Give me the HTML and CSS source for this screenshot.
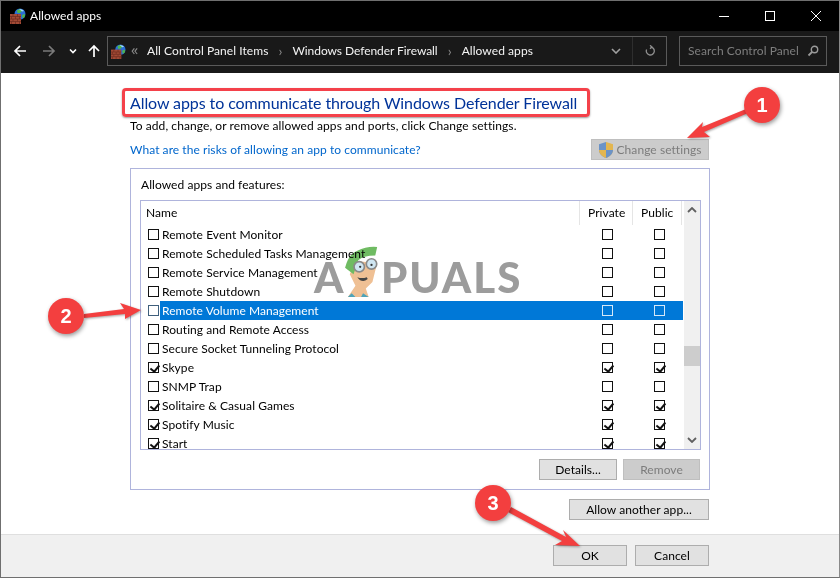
FILE: index.html
```html
<!DOCTYPE html>
<html lang="en">
<head>
<meta charset="utf-8">
<title>Allowed apps</title>
<link rel="stylesheet" href="styles.css">
</head>
<body>
<svg class="defs" width="0" height="0" aria-hidden="true">
  <defs>
    <symbol id="fw" viewBox="0 0 16 16">
      <circle cx="10" cy="6" r="5.5" fill="#2a6fd6"/>
      <path d="M7 2.2 L10 1 L12 3 L10 5 L7.5 5Z M12 7 L15 6 L14.5 9.5 L12.5 10Z" fill="#4fb848"/>
      <path d="M9 1 Q12 .8 14 3 L12 3.5Z" fill="#a8dcf5"/>
      <rect x="0" y="6" width="11" height="10" fill="#a24a35"/>
      <path d="M0 8.5H11M0 11H11M0 13.5H11M3 6V8.5M7.5 6V8.5M1.5 8.5V11M5.5 8.5V11M9.5 8.5V11M3 11V13.5M7.5 11V13.5M1.5 13.5V16M5.5 13.5V16M9.5 13.5V16" stroke="#6d2c20" stroke-width=".7" fill="none"/>
    </symbol>
  </defs>
</svg>
<div class="window">
  <header class="titlebar">
    <svg class="title-icon"><use href="#fw"/></svg>
    <span class="title-text">Allowed apps</span>
    <div class="win-controls">
      <svg class="ctl" viewBox="0 0 46 20"><path d="M18 10.5H28" stroke="#fff" fill="none"/></svg>
      <svg class="ctl" viewBox="0 0 46 20"><rect x="18.5" y="5.5" width="9" height="9" stroke="#fff" fill="none"/></svg>
      <svg class="ctl" viewBox="0 0 46 20"><path d="M18 5L28 15M28 5L18 15" stroke="#fff" fill="none"/></svg>
    </div>
  </header>
  <nav class="navbar">
    <svg class="nav-icon back" viewBox="0 0 14 14"><path d="M13 7H2M7 2L2 7L7 12" stroke="#fff" stroke-width="1.7" fill="none"/></svg>
    <svg class="nav-icon forward" viewBox="0 0 14 14"><path d="M1 7H12M7 2L12 7L7 12" stroke="#7a7a7a" stroke-width="1.7" fill="none"/></svg>
    <svg class="nav-caret" viewBox="0 0 8 6"><path d="M1 1.5L4 4.5L7 1.5" stroke="#fff" stroke-width="1.6" fill="none"/></svg>
    <svg class="nav-icon up" viewBox="0 0 14 14"><path d="M7 13V2M2 7L7 2L12 7" stroke="#fff" stroke-width="1.7" fill="none"/></svg>
    <div class="address">
      <svg class="addr-icon"><use href="#fw"/></svg>
      <span class="addr-more">«</span>
      <span class="crumb first">All Control Panel Items</span>
      <span class="sep">›</span>
      <span class="crumb second">Windows Defender Firewall</span>
      <span class="sep">›</span>
      <span class="crumb">Allowed apps</span>
      <span class="addr-spacer"></span>
      <span class="addr-drop"><svg viewBox="0 0 10 6" class="drop-icon"><path d="M1 1L5 5L9 1" stroke="#a0a0a0" stroke-width="1.6" fill="none"/></svg></span>
      <span class="addr-refresh"><svg viewBox="0 0 12 12" class="refresh-icon"><path d="M6.5 2A4 4 0 1 1 2.6 4.5M6 .3L8 2L6 3.8" stroke="#8f8f8f" stroke-width="1.3" fill="none"/></svg></span>
    </div>
    <div class="search">
      <span class="search-text">Search Control Panel</span>
      <svg viewBox="0 0 12 12" class="search-icon"><circle cx="7.5" cy="4.5" r="3.2" stroke="#9a9a9a" stroke-width="1.4" fill="none"/><path d="M5 7L1.5 10.5" stroke="#9a9a9a" stroke-width="1.8"/></svg>
    </div>
  </nav>
  <main class="content">
    <h1 class="heading">Allow apps to communicate through Windows Defender Firewall</h1>
    <p class="desc">To add, change, or remove allowed apps and ports, click Change settings.</p>
    <div class="link-row">
      <a class="risk-link">What are the risks of allowing an app to communicate?</a>
      <button class="btn disabled change">
        <svg class="shield" viewBox="0 0 14 16"><path d="M7 0L14 2.2V8C14 12 10.5 14.8 7 16Z" fill="#e3b64f"/><path d="M7 0L0 2.2V8C0 12 3.5 14.8 7 16Z" fill="#6b93c7"/><path d="M7 8H14C14 12 10.5 14.8 7 16Z" fill="#6b93c7"/><path d="M0 8H7V16C3.5 14.8 0 12 0 8Z" fill="#e3b64f"/></svg>
        Change settings
      </button>
    </div>
    <section class="group">
      <div class="group-label">Allowed apps and features:</div>
      <div class="listbox">
        <div class="list-main">
          <div class="list-head">
            <span class="h-name">Name</span>
            <span class="h-col h-private">Private</span>
            <span class="h-col h-public">Public</span>
          </div>
          <div class="row"><span class="cb-cell"><i class="cb"></i></span><div class="row-body"><span class="name">Remote Event Monitor</span><span class="col c-priv"><i class="cb"></i></span><span class="col c-pub"><i class="cb"></i></span></div></div>
          <div class="row"><span class="cb-cell"><i class="cb"></i></span><div class="row-body"><span class="name">Remote Scheduled Tasks Management</span><span class="col c-priv"><i class="cb"></i></span><span class="col c-pub"><i class="cb"></i></span></div></div>
          <div class="row"><span class="cb-cell"><i class="cb"></i></span><div class="row-body"><span class="name">Remote Service Management</span><span class="col c-priv"><i class="cb"></i></span><span class="col c-pub"><i class="cb"></i></span></div></div>
          <div class="row"><span class="cb-cell"><i class="cb"></i></span><div class="row-body"><span class="name">Remote Shutdown</span><span class="col c-priv"><i class="cb"></i></span><span class="col c-pub"><i class="cb"></i></span></div></div>
          <div class="row selected"><span class="cb-cell"><i class="cb dim"></i></span><div class="row-body"><span class="name">Remote Volume Management</span><span class="col c-priv"><i class="cb"></i></span><span class="col c-pub"><i class="cb"></i></span></div></div>
          <div class="row"><span class="cb-cell"><i class="cb"></i></span><div class="row-body"><span class="name">Routing and Remote Access</span><span class="col c-priv"><i class="cb"></i></span><span class="col c-pub"><i class="cb"></i></span></div></div>
          <div class="row"><span class="cb-cell"><i class="cb"></i></span><div class="row-body"><span class="name">Secure Socket Tunneling Protocol</span><span class="col c-priv"><i class="cb"></i></span><span class="col c-pub"><i class="cb"></i></span></div></div>
          <div class="row"><span class="cb-cell"><i class="cb on"></i></span><div class="row-body"><span class="name">Skype</span><span class="col c-priv"><i class="cb on"></i></span><span class="col c-pub"><i class="cb on"></i></span></div></div>
          <div class="row"><span class="cb-cell"><i class="cb"></i></span><div class="row-body"><span class="name">SNMP Trap</span><span class="col c-priv"><i class="cb"></i></span><span class="col c-pub"><i class="cb"></i></span></div></div>
          <div class="row"><span class="cb-cell"><i class="cb on"></i></span><div class="row-body"><span class="name">Solitaire &amp; Casual Games</span><span class="col c-priv"><i class="cb on"></i></span><span class="col c-pub"><i class="cb on"></i></span></div></div>
          <div class="row"><span class="cb-cell"><i class="cb on"></i></span><div class="row-body"><span class="name">Spotify Music</span><span class="col c-priv"><i class="cb on"></i></span><span class="col c-pub"><i class="cb on"></i></span></div></div>
          <div class="row"><span class="cb-cell"><i class="cb on"></i></span><div class="row-body"><span class="name">Start</span><span class="col c-priv"><i class="cb on"></i></span><span class="col c-pub"><i class="cb on"></i></span></div></div>
        </div>
        <div class="scrollbar">
          <svg class="sb-arrow" viewBox="0 0 10 6"><path d="M1 5L5 1L9 5" stroke="#606060" stroke-width="1.8" fill="none"/></svg>
          <div class="sb-thumb"></div>
          <svg class="sb-arrow bottom" viewBox="0 0 10 6"><path d="M1 1L5 5L9 1" stroke="#606060" stroke-width="1.8" fill="none"/></svg>
        </div>
      </div>
      <div class="group-actions">
        <button class="btn details">Details...</button>
        <button class="btn disabled remove">Remove</button>
      </div>
    </section>
    <div class="allow-row"><button class="btn allow">Allow another app...</button></div>
  </main>
  <footer class="footer">
    <button class="btn ok">OK</button>
    <button class="btn cancel">Cancel</button>
  </footer>
</div>

<div class="watermark" aria-label="Appuals watermark">
  <svg class="mascot" viewBox="0 0 40 54">
    <path d="M6 30L12 42L4 54H26L23 45L30 38L35 18L12 16Z" fill="#efc094"/>
    <path d="M1 23 Q5 8 14 5 Q24 0 35 1 L33 10 Q20 10 15 15 L10 30 Z" fill="#6fbb62"/>
    <circle cx="16" cy="22" r="5.5" fill="#cfe6f2" stroke="#8a8a8a" stroke-width="1.8"/>
    <circle cx="29" cy="19" r="5.5" fill="#cfe6f2" stroke="#8a8a8a" stroke-width="1.8"/>
    <circle cx="17" cy="22" r="1.2" fill="#333"/><circle cx="29" cy="20" r="1.2" fill="#333"/>
    <path d="M14 33Q19 40 25 35L24 33Q19 35 14 33Z" fill="#444"/>
    <path d="M8 50L4 54H12Z M20 50L18 54H26Z" fill="#4fa3b8"/>
  </svg>
  <span class="wm-a">A</span><span class="wm-rest">PUALS</span>
</div>

<div class="redbox"></div>
<svg class="annotations" viewBox="0 0 840 578">
  <polygon points="687,138 703,122 702,127 746,109 748,113 704,132 710,137"/>
  <polygon points="141,310 120,303 124,309 84,314 84,318 125,314 125,319"/>
  <polygon points="580,546 563,530 566,537 511,507 508,512 562,541 555,545"/>
  <g class="badge"><circle cx="762" cy="105" r="18"/><text x="762" y="112">1</text></g>
  <g class="badge"><circle cx="66" cy="316" r="18"/><text x="66" y="323">2</text></g>
  <g class="badge"><circle cx="493" cy="503" r="18"/><text x="493" y="510">3</text></g>
</svg>
</body>
</html>
```

FILE: styles.css
```css
* { box-sizing: border-box; }
html, body { margin: 0; padding: 0; }
body {
  width: 840px;
  height: 578px;
  overflow: hidden;
  position: relative;
  background: #fff;
  font-family: "Lato", "Noto Sans", sans-serif;
  font-size: 12px;
  letter-spacing: .06px;
  color: #000;
}
.defs { position: absolute; }
.window {
  width: 840px;
  height: 578px;
  border: 1px solid #6f6f6f;
  border-right-color: #8a8a8a;
  display: flex;
  flex-direction: column;
}
.titlebar {
  height: 30px;
  background: #000;
  display: flex;
  align-items: center;
  color: #fff;
  flex: none;
}
.title-icon { width: 16px; height: 16px; margin-left: 9px; }
.title-text { margin-left: 4px; line-height: 16px; }
.win-controls { margin-left: auto; display: flex; }
.ctl { width: 46px; height: 20px; display: block; }

.navbar {
  height: 42px;
  background: #191919;
  display: flex;
  align-items: center;
  flex: none;
  color: #fff;
  padding-bottom: 2px;
}
.nav-icon { width: 14px; height: 14px; flex: none; }
.back { margin-left: 12px; }
.forward { margin-left: 15px; }
.nav-caret { width: 8px; height: 6px; margin-left: 13px; flex: none; }
.up { margin-left: 10px; }
.address {
  margin-left: 6px;
  width: 560px;
  height: 30px;
  border: 1px solid #5a5a5a;
  display: flex;
  align-items: center;
  flex: none;
}
.addr-icon { width: 15px; height: 15px; margin-left: 3px; flex: none; }
.addr-more {
  color: #8a8a8a;
  margin-left: 5px;
  width: 11px;
  font-family: "Noto Sans", sans-serif;
  font-size: 14px;
  line-height: 16px;
  padding-bottom: 2px;
}
.crumb { white-space: nowrap; color: #f4f4f4; padding-bottom: 2px; }
.crumb.first { margin-left: 5px; }
.crumb.second { letter-spacing: -.06px; }
.sep { color: #8a8a8a; margin: 0 10px; font-size: 14px; line-height: 14px; }
.addr-spacer { flex: 1; }
.addr-drop {
  width: 33px;
  height: 28px;
  display: flex;
  align-items: center;
  justify-content: center;
  border-right: 1px solid #2e2e2e;
}
.drop-icon { width: 10px; height: 6px; }
.addr-refresh { width: 33px; height: 28px; display: flex; align-items: center; justify-content: center; }
.refresh-icon { width: 12px; height: 12px; }
.search {
  margin-left: 12px;
  width: 148px;
  height: 30px;
  border: 1px solid #5a5a5a;
  display: flex;
  align-items: center;
  justify-content: space-between;
  padding: 0 7px 0 8px;
  flex: none;
}
.search-text { color: #7e7e7e; white-space: nowrap; padding-bottom: 2px; }
.search-icon { width: 12px; height: 12px; flex: none; }

.content {
  flex: 1;
  padding: 19px 0 0 129px;
  min-height: 0;
}
.heading {
  margin: 0;
  font-size: 16px;
  font-weight: 400;
  letter-spacing: -.09px;
  line-height: 22px;
  color: #003399;
  white-space: nowrap;
}
.desc { margin: 4px 0 0; line-height: 16px; letter-spacing: .08px; }
.link-row {
  margin-top: 5px;
  width: 580px;
  height: 21px;
  display: flex;
  align-items: center;
  justify-content: space-between;
}
.risk-link { color: #0066cc; white-space: nowrap; }
.btn {
  font: inherit;
  letter-spacing: inherit;
  color: #000;
  height: 21px;
  padding: 0;
  background: #e1e1e1;
  border: 1px solid #adadad;
  display: inline-flex;
  align-items: center;
  justify-content: center;
  white-space: nowrap;
}
.btn.disabled { background: #cccccc; border-color: #bfbfbf; color: #7c7c7c; }
.change { width: 118px; margin-right: 1px; }
.shield { width: 14px; height: 16px; margin-right: 4px; }
.group {
  margin-top: 8px;
  width: 580px;
  height: 322px;
  border: 1px solid #afb4dc;
  padding: 8px 8px 0 9px;
}
.group-label { line-height: 16px; margin: 0 0 7px 1px; }
.listbox {
  height: 250px;
  width: 561px;
  border: 1px solid #afb4dc;
  display: flex;
  overflow: hidden;
}
.list-main { width: 542px; flex: none; overflow: hidden; }
.list-head { height: 24px; display: flex; align-items: center; }
.h-name { width: 438px; padding-left: 5px; padding-bottom: 2px; }
.h-col { border-left: 1px solid #e5e5e5; height: 24px; line-height: 23px; }
.h-private { width: 53px; padding-left: 8px; }
.h-public { width: 50px; padding-left: 8px; border-right: 1px solid #e5e5e5; }
.row { height: 19px; display: flex; }
.cb-cell { width: 19px; padding: 4px 0 0 7px; flex: none; }
.row-body { flex: 1; display: flex; }
.name { width: 419px; padding-left: 2px; line-height: 19px; white-space: nowrap; }
.col { padding-top: 4px; }
.c-priv { width: 53px; padding-left: 23px; }
.c-pub { width: 50px; padding-left: 22px; }
.cb {
  display: block;
  position: relative;
  width: 11px;
  height: 11px;
  border: 1px solid #111;
  background: #fff;
}
.cb.on::after {
  content: "";
  position: absolute;
  left: 2.5px;
  top: 0;
  width: 3.5px;
  height: 7px;
  border: solid #111;
  border-width: 0 2px 2px 0;
  transform: rotate(40deg);
}
.selected .row-body { background: #0078d7; color: #fff; }
.selected .row-body .cb { background: transparent; border-color: #d5e8f8; }
.cb.dim { border-color: #3f5f7c; }
.scrollbar {
  flex: 1;
  margin-left: 1px;
  background: #f0f0f0;
  display: flex;
  flex-direction: column;
  align-items: center;
  position: relative;
}
.sb-arrow { width: 10px; height: 6px; margin-top: 6px; flex: none; }
.sb-thumb { width: 100%; height: 20px; margin-top: 133px; background: #cdcdcd; flex: none; }
.sb-arrow.bottom { margin-top: auto; margin-bottom: 6px; }
.group-actions { display: flex; justify-content: flex-end; gap: 6px; margin-top: 9px; }
.details { width: 78px; }
.remove { width: 77px; margin-right: 1px; }
.allow-row { width: 579px; margin-top: 9px; display: flex; justify-content: flex-end; }
.allow { width: 140px; }
.footer {
  height: 43px;
  flex: none;
  background: #f0f0f0;
  border-top: 1px solid #dfdfdf;
  display: flex;
  justify-content: flex-end;
  gap: 8px;
  padding: 10px 130px 0 0;
}
.ok, .cancel { width: 74px; }

.watermark {
  position: absolute;
  left: 314px;
  top: 246px;
  width: 210px;
  height: 54px;
  color: #9c9c9c;
  font-family: "Lato", sans-serif;
  font-weight: 900;
  font-size: 42px;
  line-height: 42px;
  mix-blend-mode: multiply;
}
.wm-a { position: absolute; left: 0; top: 10px; }
.wm-rest { position: absolute; left: 67px; top: 10px; letter-spacing: 2px; }
.mascot { position: absolute; left: 30px; top: 0; width: 38px; height: 51px; }
.redbox {
  position: absolute;
  left: 122px;
  top: 88px;
  width: 468px;
  height: 29px;
  border: 3px solid #f4414a;
  border-radius: 4px;
  box-shadow: 0 1px 2px rgba(0,0,0,.4);
}
.annotations {
  position: absolute;
  left: 0;
  top: 0;
  width: 840px;
  height: 578px;
  pointer-events: none;
}
.annotations polygon { fill: #f33f3f; filter: drop-shadow(1px 1px 1px rgba(0,0,0,.35)); }
.badge circle { fill: #f33f3f; filter: drop-shadow(1px 2px 2px rgba(0,0,0,.4)); }
.badge text {
  fill: #fff;
  font-family: "Liberation Sans", sans-serif;
  font-weight: 700;
  font-size: 20px;
  text-anchor: middle;
}
```
